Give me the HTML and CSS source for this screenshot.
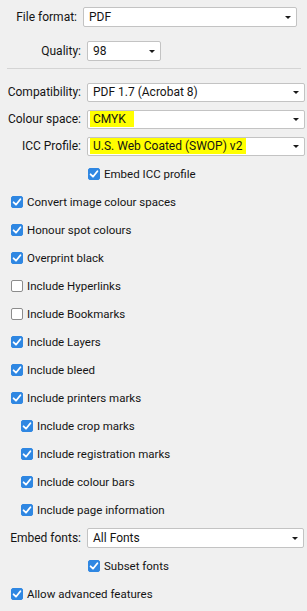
FILE: index.html
```html
<!DOCTYPE html>
<html>
<head>
<meta charset="utf-8">
<link rel="stylesheet" href="styles.css">
</head>
<body>
<div class="panel">
  <div class="row r-ff">
    <span class="label lab-ff">File format:</span>
    <div class="select sel-ff"><span class="val">PDF</span><span class="arrow"></span></div>
  </div>
  <div class="row r-q">
    <span class="label lab-q">Quality:</span>
    <div class="select sel-q"><span class="val">98</span><span class="arrow"></span></div>
  </div>
  <div class="sep"></div>
  <div class="row r-compat">
    <span class="label lab-std">Compatibility:</span>
    <div class="select sel-wide"><span class="val">PDF 1.7 (Acrobat 8)</span><span class="arrow"></span></div>
  </div>
  <div class="row r-cs">
    <span class="label lab-std">Colour space:</span>
    <div class="select sel-wide"><span class="val"><span class="hl hl-cmyk">CMYK</span></span><span class="arrow"></span></div>
  </div>
  <div class="row r-icc">
    <span class="label lab-std">ICC Profile:</span>
    <div class="select sel-wide"><span class="val"><span class="hl hl-icc">U.S. Web Coated (SWOP) v2</span></span><span class="arrow"></span></div>
  </div>
  <div class="row check sub-field"><span class="cb on"><svg viewBox="0 0 12 12"><path d="M2.6 6.3 L5 8.7 L9.4 3.2"/></svg></span><span class="txt">Embed ICC profile</span></div>
  <div class="row check"><span class="cb on"><svg viewBox="0 0 12 12"><path d="M2.6 6.3 L5 8.7 L9.4 3.2"/></svg></span><span class="txt">Convert image colour spaces</span></div>
  <div class="row check"><span class="cb on"><svg viewBox="0 0 12 12"><path d="M2.6 6.3 L5 8.7 L9.4 3.2"/></svg></span><span class="txt">Honour spot colours</span></div>
  <div class="row check"><span class="cb on"><svg viewBox="0 0 12 12"><path d="M2.6 6.3 L5 8.7 L9.4 3.2"/></svg></span><span class="txt">Overprint black</span></div>
  <div class="row check"><span class="cb"></span><span class="txt">Include Hyperlinks</span></div>
  <div class="row check"><span class="cb"></span><span class="txt">Include Bookmarks</span></div>
  <div class="row check"><span class="cb on"><svg viewBox="0 0 12 12"><path d="M2.6 6.3 L5 8.7 L9.4 3.2"/></svg></span><span class="txt">Include Layers</span></div>
  <div class="row check"><span class="cb on"><svg viewBox="0 0 12 12"><path d="M2.6 6.3 L5 8.7 L9.4 3.2"/></svg></span><span class="txt">Include bleed</span></div>
  <div class="row check"><span class="cb on"><svg viewBox="0 0 12 12"><path d="M2.6 6.3 L5 8.7 L9.4 3.2"/></svg></span><span class="txt">Include printers marks</span></div>
  <div class="row check indent"><span class="cb on"><svg viewBox="0 0 12 12"><path d="M2.6 6.3 L5 8.7 L9.4 3.2"/></svg></span><span class="txt">Include crop marks</span></div>
  <div class="row check indent"><span class="cb on"><svg viewBox="0 0 12 12"><path d="M2.6 6.3 L5 8.7 L9.4 3.2"/></svg></span><span class="txt">Include registration marks</span></div>
  <div class="row check indent"><span class="cb on"><svg viewBox="0 0 12 12"><path d="M2.6 6.3 L5 8.7 L9.4 3.2"/></svg></span><span class="txt">Include colour bars</span></div>
  <div class="row check indent"><span class="cb on"><svg viewBox="0 0 12 12"><path d="M2.6 6.3 L5 8.7 L9.4 3.2"/></svg></span><span class="txt">Include page information</span></div>
  <div class="row r-ef">
    <span class="label lab-std">Embed fonts:</span>
    <div class="select sel-ef"><span class="val">All Fonts</span><span class="arrow"></span></div>
  </div>
  <div class="row check sub-field"><span class="cb on"><svg viewBox="0 0 12 12"><path d="M2.6 6.3 L5 8.7 L9.4 3.2"/></svg></span><span class="txt">Subset fonts</span></div>
  <div class="row check"><span class="cb on"><svg viewBox="0 0 12 12"><path d="M2.6 6.3 L5 8.7 L9.4 3.2"/></svg></span><span class="txt">Allow advanced features</span></div>
</div>
</body>
</html>
```

FILE: styles.css
```css
html, body {
  margin: 0;
  padding: 0;
  background: #f0f0f0;
}
body {
  width: 307px;
  height: 611px;
  overflow: hidden;
  font-family: Roboto, "Noto Sans", sans-serif;
  font-size: 12px;
  color: #141414;
}
.panel {
  display: flex;
  flex-direction: column;
  padding-top: 3px;
}
.row {
  display: flex;
  align-items: center;
  height: 28px;
}
.r-q {
  margin-top: 6px;
}
.sep {
  height: 1px;
  background: #d4d4d4;
  margin: 3px 6px 9px 7px;
}
.r-cs {
  height: 26px;
}
.label {
  text-align: right;
  flex: none;
  white-space: nowrap;
}
.lab-ff { width: 77px; margin-right: 6px; }
.lab-q { width: 81px; margin-right: 6px; }
.lab-std { width: 81px; margin-right: 6px; }
.select {
  flex: none;
  box-sizing: border-box;
  height: 20px;
  background: #ffffff;
  border: 1px solid #c3c3c3;
  border-radius: 2px;
  display: flex;
  align-items: center;
  justify-content: space-between;
  padding: 0 5px 0 5px;
}
.sel-ff { width: 214px; }
.sel-q { width: 74px; }
.sel-wide { width: 218px; height: 19px; }
.sel-ef { width: 217px; }
.val {
  white-space: nowrap;
  display: flex;
  align-items: center;
}
.arrow {
  width: 0;
  height: 0;
  border-left: 3px solid transparent;
  border-right: 3px solid transparent;
  border-top: 3px solid #1a1a1a;
  margin-top: 1px;
}
.hl {
  background: #ffff00;
  margin-left: -3px;
  padding: 1px 0 1px 3px;
}
.hl-cmyk { padding-right: 8px; }
.hl-icc { padding-right: 4px; }
.check {
  padding-left: 11px;
}
.check.indent {
  padding-left: 21px;
}
.check.sub-field {
  padding-left: 88px;
}
.cb {
  flex: none;
  box-sizing: border-box;
  width: 12px;
  height: 12px;
  border: 1px solid #8c8c8c;
  border-radius: 2px;
  background: #ffffff;
  margin-right: 4px;
  display: flex;
  align-items: center;
  justify-content: center;
}
.cb.on {
  background: #2f87e2;
  border-color: #2f87e2;
}
.cb svg {
  width: 12px;
  height: 12px;
  flex: none;
}
.cb svg path {
  fill: none;
  stroke: #ffffff;
  stroke-width: 1.8;
  stroke-linecap: round;
  stroke-linejoin: round;
}
.txt {
  white-space: nowrap;
  font-size: 11.5px;
}
```
